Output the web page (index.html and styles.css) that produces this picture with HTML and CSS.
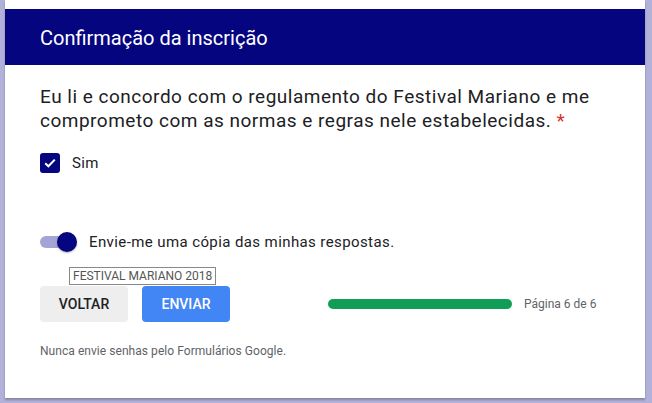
FILE: index.html
```html
<!DOCTYPE html>
<html lang="pt">
<head>
<meta charset="utf-8">
<link rel="stylesheet" href="styles.css">
</head>
<body>
<div class="card">
  <div class="header">Confirmação da inscrição</div>
  <div class="content">
    <div class="question">Eu li e concordo com o regulamento do Festival Mariano e me comprometo com as normas e regras nele estabelecidas.&nbsp;<span class="req">*</span></div>
    <label class="check">
      <span class="box"><svg width="14" height="14" viewBox="0 0 14 14"><path d="M2.2 7.2 L5.4 10.3 L11.8 3.6" fill="none" stroke="#fff" stroke-width="2"/></svg></span>
      <span class="check-label">Sim</span>
    </label>
    <div class="toggle-row">
      <span class="toggle"><span class="track"></span><span class="thumb"></span></span>
      <span class="toggle-label">Envie-me uma cópia das minhas respostas.</span>
    </div>
    <div class="actions">
      <span class="tooltip">FESTIVAL MARIANO 2018</span>
      <button class="btn back">VOLTAR</button>
      <button class="btn send">ENVIAR</button>
      <div class="progress"><div class="bar"></div><span class="ptext">Página 6 de 6</span></div>
    </div>
    <div class="footer">Nunca envie senhas pelo Formulários Google.</div>
  </div>
</div>
</body>
</html>
```
FILE: styles.css
```css
html, body {
  margin: 0;
  padding: 0;
}
body {
  background: #b1b1da;
  font-family: Roboto, "Liberation Sans", sans-serif;
  width: 652px;
  height: 403px;
  overflow: hidden;
}
.card {
  margin-left: 5px;
  width: 640px;
  height: 398px;
  background: #fff;
  padding-top: 9px;
  box-sizing: border-box;
  box-shadow: 0 2px 2px rgba(0,0,0,0.25);
}
.header {
  background: #050580;
  color: #fff;
  height: 56px;
  box-sizing: border-box;
  padding: 17px 0 0 35px;
  font-size: 20px;
  line-height: 24px;
}
.content {
  padding: 0 20px 0 35px;
}
.question {
  margin-top: 20px;
  font-size: 19px;
  line-height: 24px;
  color: #202124;
  letter-spacing: 0.5px;
}
.req {
  color: #d93025;
}
.check {
  display: flex;
  align-items: center;
  margin-top: 20px;
}
.box {
  width: 20px;
  height: 20px;
  background: #050580;
  border-radius: 3px;
  display: flex;
  align-items: center;
  justify-content: center;
}
.check-label {
  margin-left: 12px;
  font-size: 15px;
  color: #202124;
  letter-spacing: 0.3px;
}
.toggle-row {
  display: flex;
  align-items: center;
  margin-top: 59px;
}
.toggle {
  position: relative;
  width: 38px;
  height: 20px;
}
.track {
  position: absolute;
  left: 0;
  top: 4px;
  width: 34px;
  height: 12px;
  border-radius: 6px;
  background: #a5a5d5;
}
.thumb {
  position: absolute;
  left: 17px;
  top: 0;
  width: 20px;
  height: 20px;
  border-radius: 50%;
  background: #050580;
  box-shadow: 0 1px 2px rgba(0,0,0,0.3);
}
.toggle-label {
  margin-left: 11px;
  font-size: 15px;
  color: #202124;
  letter-spacing: 0.4px;
}
.actions {
  position: relative;
  display: flex;
  align-items: center;
  margin-top: 24px;
  padding-top: 10px;
}
.tooltip {
  position: absolute;
  left: 29px;
  top: -9px;
  font-size: 12px;
  line-height: 16px;
  padding: 0 3px;
  color: #555;
  background: #fff;
  border: 1px solid #888;
  z-index: 2;
}
.btn {
  width: 88px;
  height: 36px;
  border: none;
  border-radius: 4px;
  font-family: Roboto, "Liberation Sans", sans-serif;
  font-size: 14px;
  font-weight: 500;
  padding: 0;
}
.back {
  background: #eeeeee;
  color: #202124;
}
.send {
  margin-left: 14px;
  background: #4285f4;
  color: #fff;
}
.progress {
  display: flex;
  align-items: center;
  margin-left: 98px;
}
.bar {
  width: 184px;
  height: 10px;
  border-radius: 5px;
  background: #0f9d58;
}
.ptext {
  margin-left: 12px;
  font-size: 12px;
  color: #5f6368;
}
.footer {
  margin-top: 22px;
  font-size: 12px;
  color: #5f6368;
  letter-spacing: 0.05px;
}
```
